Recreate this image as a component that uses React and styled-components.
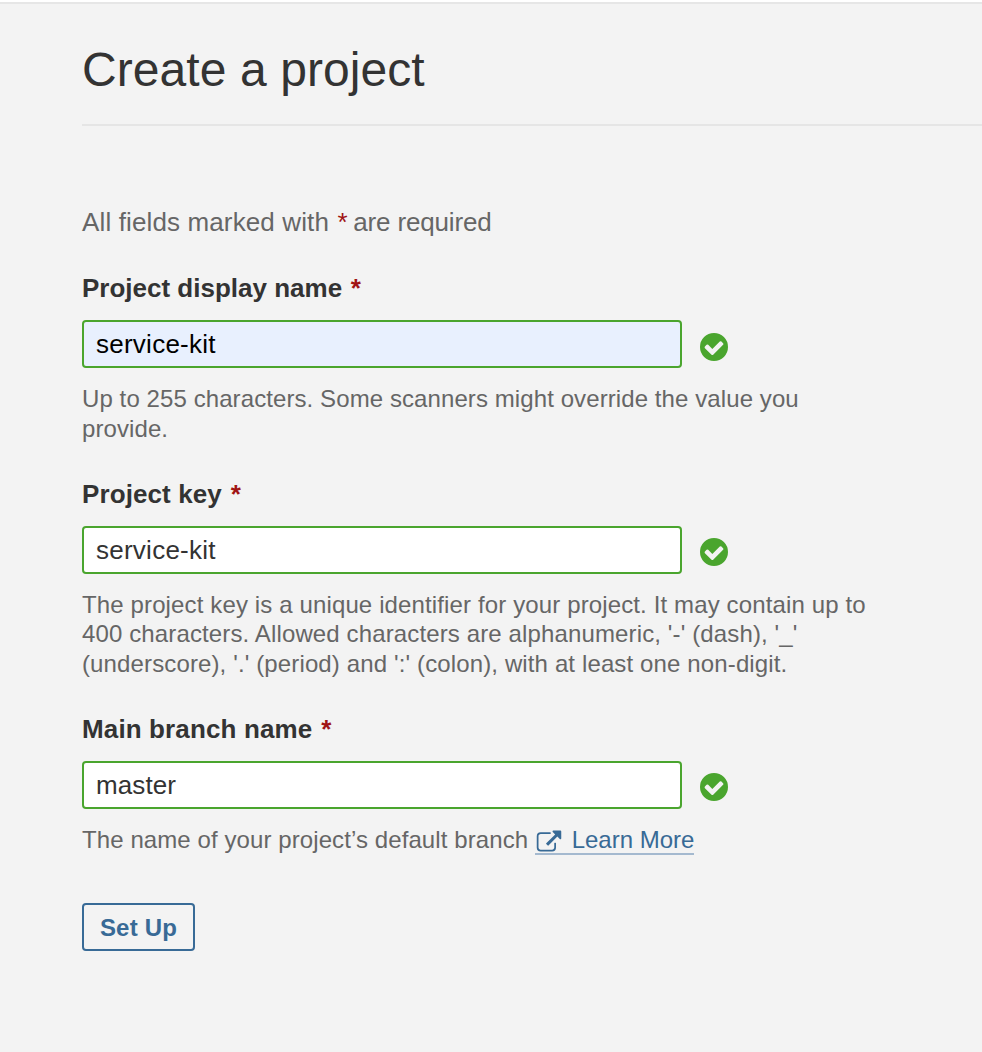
import React from "react";
import styled, { createGlobalStyle } from "styled-components";

const GlobalStyle = createGlobalStyle`
  * { box-sizing: border-box; }
  body {
    margin: 0;
    background: #f3f3f3;
    color: #333;
    font-family: "Liberation Sans", Arial, sans-serif;
  }
`;

const Page = styled.main`
  min-height: 1052px;
  border-top: 2px solid #fff;
  overflow: hidden;
`;

const Content = styled.div`
  border-top: 2px solid #e6e6e6;
  padding: 37px 0 0 82px;
`;

const Header = styled.header`
  height: 85px;
  border-bottom: 2px solid #e5e5e5;
`;

const Title = styled.h1`
  margin: 0;
  font-size: 48px;
  font-weight: 400;
  line-height: 57px;
  letter-spacing: 0.08px;
`;

const Form = styled.form`
  padding-top: 81px;
`;

const RequiredNote = styled.p`
  display: flex;
  margin: 0 0 36px;
  font-size: 26px;
  line-height: 30px;
  color: #666;
`;

const NoteText = styled.span`
  letter-spacing: ${(p) => p.$tracking}px;
`;

const Mandatory = styled.em`
  margin-left: 1.5px;
  font-style: normal;
  color: #a01414;
`;

const NoteMandatory = styled(Mandatory)`
  margin: 0 5.5px 0 8.5px;
`;

const Field = styled.div`
  width: 800px;
  margin-bottom: 35px;
`;

const Label = styled.label`
  display: block;
  margin-bottom: 17px;
  font-size: 26px;
  font-weight: 700;
  line-height: 30px;
  letter-spacing: ${(p) => p.$tracking}px;
`;

const InputRow = styled.div`
  display: flex;
  align-items: flex-start;
  gap: 18px;
  margin-bottom: 16px;
`;

const Input = styled.input`
  width: 600px;
  height: 48px;
  padding: 0 12px;
  border: 2px solid #4aa52e;
  border-radius: 4px;
  outline: none;
  background: ${(p) => (p.$autofilled ? "#e8f0fe" : "#fff")};
  color: ${(p) => (p.$autofilled ? "#000" : "#333")};
  font: 400 26px "Liberation Sans", Arial, sans-serif;
  letter-spacing: ${(p) => p.$tracking}px;
`;

const ValidMark = styled.svg`
  flex: none;
  width: 28px;
  height: 28px;
  margin-top: ${(p) => p.$offset}px;
`;

const Help = styled.div`
  min-height: ${(p) => p.$minHeight}px;
  font-size: 24px;
  line-height: ${(p) => p.$leading}px;
  letter-spacing: ${(p) => p.$tracking}px;
  color: #666;
`;

const Link = styled.a`
  display: inline-flex;
  height: 30px;
  align-items: center;
  gap: 8.5px;
  margin-left: 0.2px;
  padding-top: 1px;
  border-bottom: 2px solid #a4b9cf;
  vertical-align: top;
  color: #386a96;
  letter-spacing: 0;
  text-decoration: none;
`;

const LinkIcon = styled.svg`
  width: 28px;
  height: 28px;
  margin-top: 3px;
`;

const SubmitButton = styled.button`
  display: block;
  width: 113px;
  height: 48px;
  margin-top: 48px;
  padding: 2px 0 0;
  border: 2px solid #386a96;
  border-radius: 4px;
  background: transparent;
  color: #386a96;
  font: 700 24px "Liberation Sans", Arial, sans-serif;
  letter-spacing: 0.2px;
`;

function CheckIcon({ offset }) {
  return (
    <ValidMark $offset={offset} viewBox="2 2 12 12" aria-hidden="true">
      <path
        fill="#4aa52e"
        fillRule="evenodd"
        d="M12.03 6.734a.49.49 0 0 0-.14-.36l-.71-.702a.48.48 0 0 0-.352-.15.474.474 0 0 0-.35.15l-3.19 3.18-1.765-1.766a.479.479 0 0 0-.35-.15.479.479 0 0 0-.353.15l-.71.703a.482.482 0 0 0-.14.358c0 .14.046.258.14.352l2.828 2.828c.098.1.216.15.35.15.142 0 .26-.05.36-.15l4.243-4.242a.475.475 0 0 0 .14-.352zM14 8A6 6 0 1 1 2 8a6 6 0 0 1 12 0z"
      />
    </ValidMark>
  );
}

function DetachIcon() {
  return (
    <LinkIcon viewBox="0 0 16 16" aria-hidden="true">
      <path
        fill="#386a96"
        d="M12 9.25v2.5A2.25 2.25 0 0 1 9.75 14h-6.5A2.25 2.25 0 0 1 1 11.75v-6.5A2.25 2.25 0 0 1 3.25 3h5.5c.14 0 .25.11.25.25v.5c0 .14-.11.25-.25.25h-5.5C2.562 4 2 4.563 2 5.25v6.5c0 .688.563 1.25 1.25 1.25h6.5c.688 0 1.25-.563 1.25-1.25v-2.5c0-.14.11-.25.25-.25h.5c.14 0 .25.11.25.25zm3-6.75v4c0 .273-.227.5-.5.5a.497.497 0 0 1-.352-.148l-1.375-1.375L7.68 10.57a.27.27 0 0 1-.18.078.27.27 0 0 1-.18-.078l-.89-.89a.27.27 0 0 1-.078-.18.27.27 0 0 1 .078-.18l5.093-5.093-1.375-1.375A.497.497 0 0 1 10 2.5c0-.273.227-.5.5-.5h4c.273 0 .5.227.5.5z"
      />
    </LinkIcon>
  );
}

function TextField({
  id,
  label,
  value,
  autofilled,
  labelTracking = 0.05,
  inputTracking = 0.25,
  helpTracking = 0.09,
  leading = 29.4,
  helpHeight = 30,
  markOffset = 12,
  children,
}) {
  return (
    <Field>
      <Label htmlFor={id} $tracking={labelTracking}>
        {label} <Mandatory>*</Mandatory>
      </Label>
      <InputRow>
        <Input
          id={id}
          type="text"
          defaultValue={value}
          spellCheck={false}
          $autofilled={autofilled}
          $tracking={inputTracking}
        />
        <CheckIcon offset={markOffset} />
      </InputRow>
      <Help $tracking={helpTracking} $leading={leading} $minHeight={helpHeight}>
        {children}
      </Help>
    </Field>
  );
}

export default function App() {
  return (
    <>
      <GlobalStyle />
      <Page>
        <Content>
          <Header>
            <Title>Create a project</Title>
          </Header>
          <Form onSubmit={(e) => e.preventDefault()}>
            <RequiredNote>
              <NoteText $tracking={0.13}>All fields marked with</NoteText>
              <NoteMandatory>*</NoteMandatory>
              <NoteText $tracking={-0.15}>are required</NoteText>
            </RequiredNote>
            <TextField
              id="name"
              label="Project display name"
              value="service-kit"
              autofilled
              labelTracking={0}
              leading={30}
              markOffset={13}
            >
              Up to 255 characters. Some scanners might override the value you provide.
            </TextField>
            <TextField
              id="key"
              label="Project key"
              value="service-kit"
              labelTracking={0.1}
              helpTracking={0.13}
              helpHeight={89}
            >
              The project key is a unique identifier for your project. It may contain up to 400 characters.
              Allowed characters are alphanumeric, '-' (dash), '_' (underscore), '.' (period) and ':' (colon),
              with at least one non-digit.
            </TextField>
            <TextField
              id="branch"
              label="Main branch name"
              value="master"
              labelTracking={0.13}
              inputTracking={0.1}
            >
              The name of your project’s default branch{" "}
              <Link href="#learn-more">
                <DetachIcon />
                Learn More
              </Link>
            </TextField>
            <SubmitButton type="submit">Set Up</SubmitButton>
          </Form>
        </Content>
      </Page>
    </>
  );
}
